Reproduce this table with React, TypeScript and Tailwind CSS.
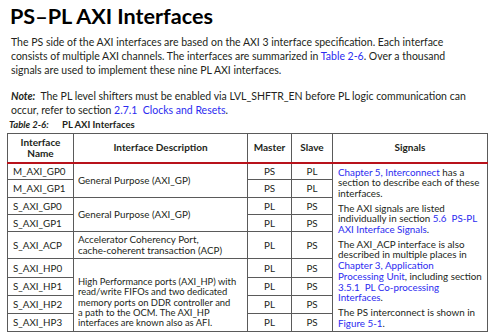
import React from "react";

const L = ({ children }: { children: React.ReactNode }) => (
  <span className="text-[#2b2bf0]">{children}</span>
);

const rows: { name: string; m: string; s: string; h: string }[] = [
  { name: "M_AXI_GP0", m: "PS", s: "PL", h: "h-[17px]" },
  { name: "M_AXI_GP1", m: "PS", s: "PL", h: "h-[18px]" },
  { name: "S_AXI_GP0", m: "PL", s: "PS", h: "h-[17px]" },
  { name: "S_AXI_GP1", m: "PL", s: "PS", h: "h-[17px]" },
  { name: "S_AXI_ACP", m: "PL", s: "PS", h: "h-[27px]" },
  { name: "S_AXI_HP0", m: "PL", s: "PS", h: "h-[19px]" },
  { name: "S_AXI_HP1", m: "PL", s: "PS", h: "h-[18px]" },
  { name: "S_AXI_HP2", m: "PL", s: "PS", h: "h-[18px]" },
  { name: "S_AXI_HP3", m: "PL", s: "PS", h: "h-[18px]" },
];

const bd = "border border-[#5a5a5a]";

export default function App() {
  return (
    <div
      className="w-[495px] h-[336px] bg-white overflow-hidden text-[#231f20]"
      style={{ fontFamily: "Lato, 'Noto Sans', sans-serif" }}
    >
      <h1 className="pl-[10px] pt-[3px] text-[21.6px] leading-[26px] font-bold text-black">
        PS–PL AXI Interfaces
      </h1>
      <p className="mt-[6px] pl-[11px] text-[10.5px] leading-[14px] whitespace-nowrap">
        The PS side of the AXI interfaces are based on the AXI 3 interface specification. Each interface
        <br />
        consists of multiple AXI channels. The interfaces are summarized in <L>Table 2-6</L>. Over a thousand
        <br />
        signals are used to implement these nine PL AXI interfaces.
      </p>
      <p className="mt-[12px] pl-[11px] text-[10.5px] leading-[14px] whitespace-nowrap">
        <b>
          <i>Note:</i>
        </b>
        &nbsp; The PL level shifters must be enabled via LVL_SHFTR_EN before PL logic communication can
        <br />
        occur, refer to section <L>2.7.1&nbsp; Clocks and Resets</L>.
      </p>
      <div className="mt-[2px] pl-[9px] text-[9.5px] leading-[12px] whitespace-nowrap font-bold">
        <i className="inline-block w-[53px]">Table 2-6:</i>
        PL AXI Interfaces
      </div>
      <table className="mt-[2px] ml-[7px] border-collapse table-fixed w-[480px] text-[9.8px] leading-[10.7px]">
        <colgroup>
          <col className="w-[66px]" />
          <col className="w-[174px]" />
          <col className="w-[44px]" />
          <col className="w-[41px]" />
          <col className="w-[155px]" />
        </colgroup>
        <thead>
          <tr className="h-[29px] font-bold text-[10px]">
            <th className={`${bd} border-b-2 border-b-[#b8121b] font-bold text-center`}>
              Interface
              <br />
              Name
            </th>
            <th className={`${bd} border-b-2 border-b-[#b8121b] font-bold text-center`}>
              Interface Description
            </th>
            <th className={`${bd} border-b-2 border-b-[#b8121b] font-bold text-center`}>Master</th>
            <th className={`${bd} border-b-2 border-b-[#b8121b] font-bold text-center`}>Slave</th>
            <th className={`${bd} border-b-2 border-b-[#b8121b] font-bold text-center`}>Signals</th>
          </tr>
        </thead>
        <tbody>
          {rows.map((r, i) => (
            <tr key={r.name} className={r.h}>
              <td className={`${bd} pl-[5px] whitespace-nowrap`}>{r.name}</td>
              {i === 0 && (
                <td rowSpan={2} className={`${bd} pl-[4px]`}>
                  General Purpose (AXI_GP)
                </td>
              )}
              {i === 2 && (
                <td rowSpan={2} className={`${bd} pl-[4px]`}>
                  General Purpose (AXI_GP)
                </td>
              )}
              {i === 4 && (
                <td className={`${bd} pl-[4px] whitespace-nowrap`}>
                  Accelerator Coherency Port,
                  <br />
                  cache-coherent transaction (ACP)
                </td>
              )}
              {i === 5 && (
                <td
                  rowSpan={4}
                  className={`${bd} pl-[4px] align-top pt-[18px] whitespace-nowrap text-[9.4px] leading-[10.3px]`}
                >
                  High Performance ports (AXI_HP) with
                  <br />
                  read/write FIFOs and two dedicated
                  <br />
                  memory ports on DDR controller and
                  <br />
                  a path to the OCM. The AXI_HP
                  <br />
                  interfaces are known also as AFI.
                </td>
              )}
              <td className={`${bd} text-center`}>{r.m}</td>
              <td className={`${bd} text-center`}>{r.s}</td>
              {i === 0 && (
                <td rowSpan={9} className={`${bd} align-top pl-[5px] pt-[3px] whitespace-nowrap`}>
                  <p>
                    <L>Chapter 5, Interconnect</L> has a
                    <br />
                    section to describe each of these
                    <br />
                    interfaces.
                  </p>
                  <p className="mt-[4px]">
                    The AXI signals are listed
                    <br />
                    individually in section <L>5.6&nbsp; PS-PL</L>
                    <br />
                    <L>AXI Interface Signals</L>.
                  </p>
                  <p className="mt-[4px]">
                    The AXI_ACP interface is also
                    <br />
                    described in multiple places in
                    <br />
                    <L>Chapter 3, Application</L>
                    <br />
                    <L>Processing Unit</L>, including section
                    <br />
                    <L>3.5.1&nbsp; PL Co-processing</L>
                    <br />
                    <L>Interfaces</L>.
                  </p>
                  <p className="mt-[4px]">
                    The PS interconnect is shown in
                    <br />
                    <L>Figure 5-1</L>.
                  </p>
                </td>
              )}
            </tr>
          ))}
        </tbody>
      </table>
    </div>
  );
}
